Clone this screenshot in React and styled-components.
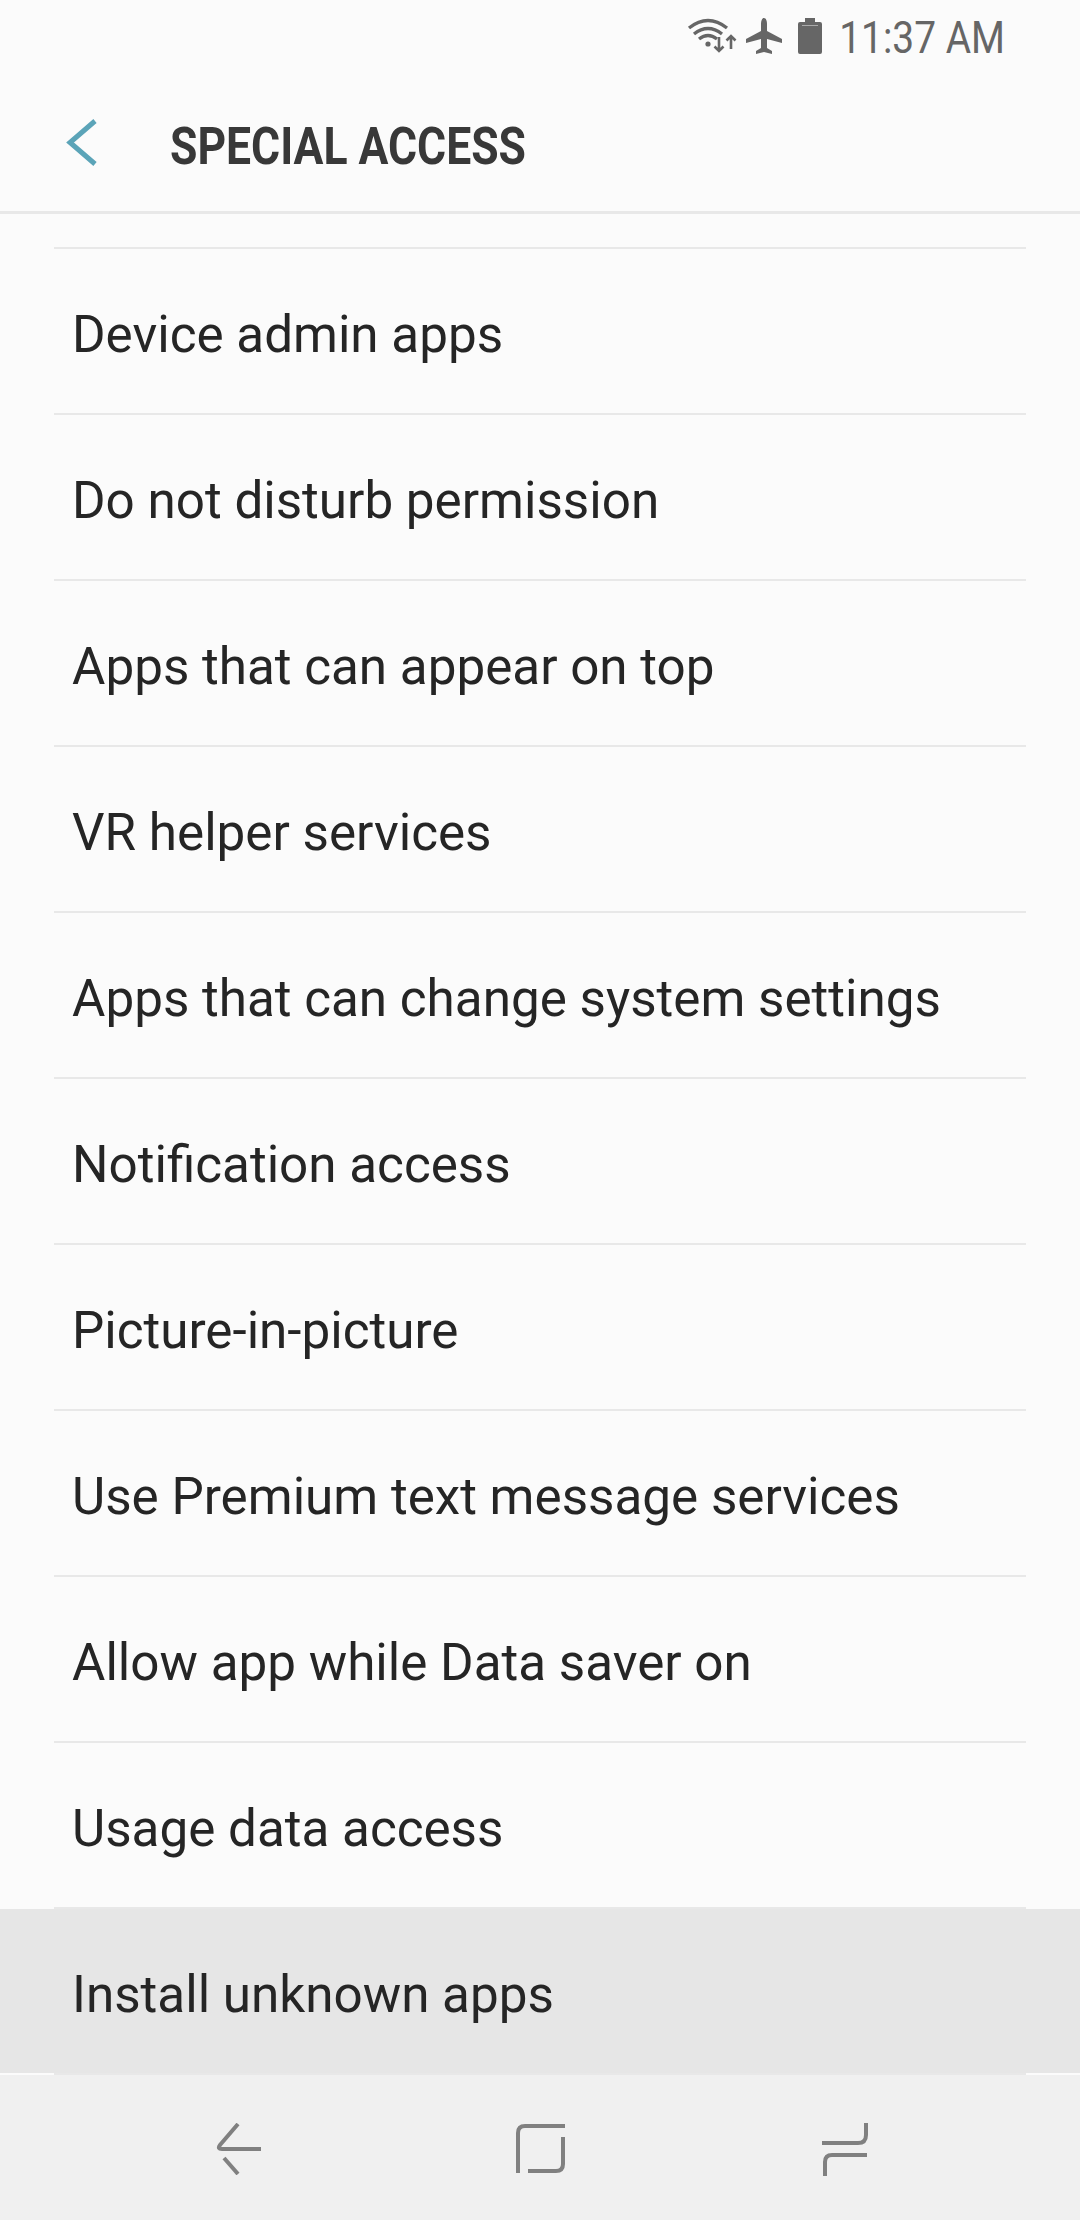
import styled, { createGlobalStyle } from "styled-components";

const items = [
  "Device admin apps",
  "Do not disturb permission",
  "Apps that can appear on top",
  "VR helper services",
  "Apps that can change system settings",
  "Notification access",
  "Picture-in-picture",
  "Use Premium text message services",
  "Allow app while Data saver on",
  "Usage data access",
  "Install unknown apps",
];

const GlobalStyle = createGlobalStyle`
  html, body {
    margin: 0;
    padding: 0;
    background: #fbfbfb;
  }
`;

const Screen = styled.div`
  width: 1080px;
  height: 2220px;
  display: flex;
  flex-direction: column;
  overflow: hidden;
  background: #fbfbfb;
  font-family: Roboto, "Liberation Sans", sans-serif;
`;

const StatusBar = styled.div`
  height: 76px;
  box-sizing: border-box;
  padding: 0 75px 4px 0;
  display: flex;
  align-items: center;
  justify-content: flex-end;
  gap: 8px;
  color: #666666;
`;

const BatterySlot = styled.div`
  display: flex;
  margin-left: 7px;
`;

const Clock = styled.span`
  font-size: 45px;
  line-height: 1;
  margin: 4px 0 0 -17px;
  transform: scaleX(0.863);
  transform-origin: right center;
`;

const Header = styled.header`
  height: 137px;
  display: flex;
  align-items: center;
  border-bottom: 3px solid #e8e8e8;
`;

const BackButton = styled.div`
  width: 170px;
  padding-left: 60px;
  box-sizing: border-box;
  display: flex;
`;

const Title = styled.h1`
  margin: 0;
  padding-top: 6px;
  font-size: 52px;
  font-weight: 700;
  color: #383838;
  transform: scaleX(0.855);
  transform-origin: left center;
  white-space: nowrap;
`;

const List = styled.div`
  flex: 1;
  display: flex;
  flex-direction: column;
`;

const Divider = styled.div`
  height: 2px;
  flex: none;
  margin: 0 54px;
  background: #e8e8e8;
`;

const TopGap = styled.div`
  height: 33px;
  flex: none;
`;

const Row = styled.div`
  height: 164px;
  box-sizing: border-box;
  padding: 7px 0 0 72px;
  flex: none;
  display: flex;
  align-items: center;
  font-size: 51.2px;
  color: #252525;
  background: ${(p) => (p.$active ? "#e6e6e6" : "transparent")};
`;

const NavBar = styled.nav`
  height: 145px;
  flex: none;
  display: flex;
  align-items: flex-start;
  background: #f0f0f0;
`;

const NavSlot = styled.div`
  flex: none;
  width: ${(p) => p.$w}px;
  padding-top: 48px;
  display: flex;
  justify-content: center;
`;

function WifiIcon() {
  return (
    <svg width="50" height="38" viewBox="0 0 50 38" fill="none">
      <g stroke="#666" strokeWidth="3.4">
        <path d="M2 11 Q21 -4 40 11" />
        <path d="M7 17 Q21 6 35 17" />
        <path d="M12 22 Q21 15 30 22" />
      </g>
      <circle cx="21" cy="27" r="2.6" fill="#666" />
      <g stroke="#666" strokeWidth="2.6" fill="none">
        <path d="M32 20 V34 M27.5 29.5 L32 34 L36.5 29.5" />
        <path d="M44 32 V19 M39.5 23.5 L44 19 L48.5 23.5" />
      </g>
    </svg>
  );
}

function PlaneIcon() {
  return (
    <svg width="38" height="36" viewBox="0 0 38 36">
      <path
        fill="#666"
        d="M19 0 C21 0 22 3 22 6 V13 L37 21 V25 L22 21 V30 L27 33 V36 L19 34 L11 36 V33 L16 30 V21 L1 25 V21 L16 13 V6 C16 3 17 0 19 0 Z"
      />
    </svg>
  );
}

function BatteryIcon() {
  return (
    <svg width="24" height="36" viewBox="0 0 24 36">
      <path
        fill="#666"
        d="M7 0 H17 V4 H22 Q24 4 24 6 V34 Q24 36 22 36 H2 Q0 36 0 34 V6 Q0 4 2 4 H7 Z"
      />
      <rect x="4" y="7" width="16" height="1" fill="#aaa" />
    </svg>
  );
}

function Chevron() {
  return (
    <svg width="40" height="50" viewBox="0 0 40 50" fill="none">
      <path d="M35 3 L10 24.5 L35 46" stroke="#5ba4b8" strokeWidth="5" />
    </svg>
  );
}

function NavBack() {
  return (
    <svg width="46" height="52" viewBox="0 0 46 52" fill="none" stroke="#808080" strokeWidth="4">
      <path d="M22 1 L4 22 Q1 26 6 26 H45" />
      <path d="M8 35 L22 51" />
    </svg>
  );
}

function NavHome() {
  return (
    <svg width="50" height="52" viewBox="0 0 50 52" fill="none" stroke="#808080" strokeWidth="4">
      <path d="M2 50 V10 Q2 3 9 3 H49" />
      <path d="M47 14 V41 Q47 48 40 48 H12" />
    </svg>
  );
}

function NavRecent() {
  return (
    <svg width="46" height="54" viewBox="0 0 46 54" fill="none" stroke="#808080" strokeWidth="4">
      <path d="M44 0 V12 Q44 20 36 20 H0" />
      <path d="M45 32 H10 Q3 32 3 39 V53" />
    </svg>
  );
}

export default function App() {
  return (
    <Screen>
      <GlobalStyle />
      <StatusBar>
        <WifiIcon />
        <PlaneIcon />
        <BatterySlot>
          <BatteryIcon />
        </BatterySlot>
        <Clock>11:37 AM</Clock>
      </StatusBar>
      <Header>
        <BackButton>
          <Chevron />
        </BackButton>
        <Title>SPECIAL ACCESS</Title>
      </Header>
      <List>
        <TopGap />
        <Divider />
        {items.map((item, i) => (
          <div key={item}>
            <Row $active={i === items.length - 1}>{item}</Row>
            <Divider />
          </div>
        ))}
      </List>
      <NavBar>
        <NavSlot $w={477}>
          <NavBack />
        </NavSlot>
        <NavSlot $w={128}>
          <NavHome />
        </NavSlot>
        <NavSlot $w={479}>
          <NavRecent />
        </NavSlot>
      </NavBar>
    </Screen>
  );
}
